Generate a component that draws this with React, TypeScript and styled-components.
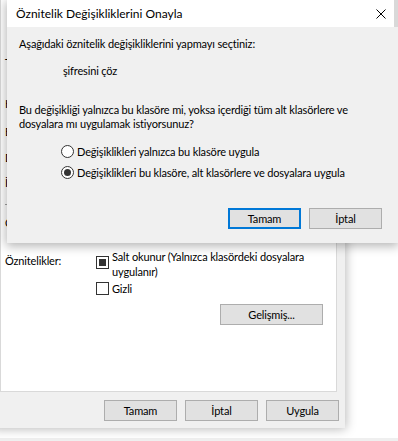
import React from 'react'
import styled, { createGlobalStyle } from 'styled-components'

const FONT = `'Lato', 'Liberation Sans', sans-serif`

const GlobalStyle = createGlobalStyle`
  html, body {
    margin: 0;
    padding: 0;
    background: #ffffff;
  }
  body {
    font-family: ${FONT};
    font-size: 11px;
    letter-spacing: -0.15px;
    color: #000;
  }
`

const Desk = styled.div`
  position: relative;
  width: 398px;
  height: 441px;
  overflow: hidden;
  background: #ffffff;
  display: flex;
  flex-direction: column;
  justify-content: flex-end;
`

const DeskEdge = styled.div`
  height: 3px;
  background: #efefef;
`

/* ---------- back window (folder properties) ---------- */

const BackWindow = styled.div`
  position: absolute;
  left: -8px;
  top: -40px;
  width: 353px;
  height: 468px;
  box-sizing: border-box;
  padding: 10px 6px 7px 8px;
  background: #f0f0f0;
  box-shadow: 0 0 10px 1px rgba(0, 0, 0, 0.28);
  display: flex;
  flex-direction: column;
`

const TabPanel = styled.div`
  height: 422px;
  margin-right: 2px;
  box-sizing: border-box;
  border: 1px solid #d9d9d9;
  background: #ffffff;
  padding: 85px 0 0 4px;
  display: flex;
  flex-direction: column;
`

const InfoRow = styled.div<{ $mt: number }>`
  height: 14px;
  line-height: 14px;
  margin-top: ${p => p.$mt}px;
  white-space: nowrap;
`

const Divider = styled.div<{ $mt: number }>`
  height: 1px;
  margin-top: ${p => p.$mt}px;
  margin-right: 12px;
  background: #a0a0a0;
`

const AttrGrid = styled.div`
  display: grid;
  grid-template-columns: 91px 1fr;
  margin-top: 19px;
`

const AttrLabel = styled.div`
  margin-top: 5px;
  line-height: 14px;
`

const AttrList = styled.div`
  display: flex;
  flex-direction: column;
`

const CheckRow = styled.label<{ $mt?: number; $boxTop?: number; $lh?: number }>`
  display: flex;
  align-items: flex-start;
  margin-top: ${p => p.$mt || 0}px;
  line-height: ${p => p.$lh || 15}px;

  & > span:first-child {
    margin-top: ${p => p.$boxTop || 0}px;
  }
`

const CheckBox = styled.span<{ $mixed?: boolean }>`
  flex: none;
  width: 13px;
  height: 13px;
  box-sizing: border-box;
  border: 1px solid #333;
  background: #fff;
  display: flex;
  align-items: center;
  justify-content: center;
  margin-right: 3px;

  &::after {
    content: '';
    width: 7px;
    height: 7px;
    background: ${p => (p.$mixed ? '#333' : 'transparent')};
  }
`

const RightRow = styled.div<{ $mt: number; $pr: number }>`
  display: flex;
  justify-content: flex-end;
  gap: 8px;
  margin-top: ${p => p.$mt}px;
  padding-right: ${p => p.$pr}px;
`

const Button = styled.button<{ $w?: number; $default?: boolean }>`
  width: ${p => p.$w || 73}px;
  height: 21px;
  box-sizing: border-box;
  padding: 0;
  font-family: ${FONT};
  font-size: 11px;
  letter-spacing: -0.15px;
  color: #000;
  background: #e1e1e1;
  border: ${p => (p.$default ? '2px solid #0078d7' : '1px solid #adadad')};
`

/* ---------- front dialog ---------- */

const Dialog = styled.div`
  position: absolute;
  left: 7px;
  top: 0;
  width: 391px;
  height: 243px;
  background: #f0f0f0;
  box-shadow: 0 2px 10px 1px rgba(0, 0, 0, 0.3);
  display: flex;
  flex-direction: column;
`

const TitleBar = styled.div`
  height: 27px;
  flex: none;
  box-sizing: border-box;
  display: flex;
  align-items: center;
  justify-content: space-between;
  padding-left: 9px;
  background: #fff;
  border-right: 4px solid #d9d9d9;
  font-size: 12px;
  letter-spacing: 0;
`

const CloseIcon = styled.svg`
  width: 10px;
  height: 10px;
  margin-right: 8px;
`

const Body = styled.div`
  padding: 10px 12px 0 12px;
  display: flex;
  flex-direction: column;
`

const Line = styled.div<{ $mt?: number; $ml?: number }>`
  line-height: 14px;
  margin-top: ${p => p.$mt || 0}px;
  margin-left: ${p => p.$ml || 0}px;
  white-space: nowrap;
`

const RadioRow = styled.label<{ $mt: number }>`
  display: flex;
  align-items: center;
  height: 14px;
  margin-top: ${p => p.$mt}px;
  margin-left: 42px;
  white-space: nowrap;
`

const Radio = styled.span<{ $on?: boolean }>`
  width: 13px;
  height: 13px;
  box-sizing: border-box;
  border: 1px solid #333;
  border-radius: 50%;
  background: #fff;
  margin-right: 3px;
  display: flex;
  align-items: center;
  justify-content: center;

  &::after {
    content: '';
    width: 7px;
    height: 7px;
    border-radius: 50%;
    background: ${p => (p.$on ? '#333' : 'transparent')};
  }
`

const info: { text: string; mt: number }[] = [
  { text: 'Tür:', mt: 0 },
  { text: 'Konum:', mt: 27 },
  { text: 'Boyut:', mt: 14 },
  { text: 'Disk boyutu:', mt: 12 },
  { text: 'İçerik:', mt: 11 },
]

const App: React.FC = () => {
  return (
    <Desk>
      <GlobalStyle />
      <DeskEdge />

      <BackWindow>
        <TabPanel>
          {info.map(row => (
            <InfoRow key={row.text} $mt={row.mt}>{row.text}</InfoRow>
          ))}
          <Divider $mt={14} />
          <InfoRow $mt={11}>Oluşturulma:</InfoRow>

          <AttrGrid>
            <AttrLabel>Öznitelikler:</AttrLabel>
            <AttrList>
              <CheckRow $boxTop={7}>
                <CheckBox $mixed />
                <span>Salt okunur (Yalnızca klasördeki dosyalara<br />uygulanır)</span>
              </CheckRow>
              <CheckRow $mt={3} $lh={13}>
                <CheckBox />
                <span>Gizli</span>
              </CheckRow>
            </AttrList>
          </AttrGrid>

          <RightRow $mt={9} $pr={13}>
            <Button $w={103}>Gelişmiş...</Button>
          </RightRow>
        </TabPanel>

        <RightRow $mt={8} $pr={0}>
          <Button>Tamam</Button>
          <Button>İptal</Button>
          <Button>Uygula</Button>
        </RightRow>
      </BackWindow>

      <Dialog>
        <TitleBar>
          <span>Öznitelik Değişikliklerini Onayla</span>
          <CloseIcon viewBox="0 0 10 10">
            <path d="M0.5 0.5 L9.5 9.5 M9.5 0.5 L0.5 9.5" stroke="#000" strokeWidth="1" />
          </CloseIcon>
        </TitleBar>
        <Body>
          <Line>Aşağıdaki öznitelik değişikliklerini yapmayı seçtiniz:</Line>
          <Line $mt={13} $ml={44}>şifresini çöz</Line>
          <Line $mt={25}>
            Bu değişikliği yalnızca bu klasöre mi, yoksa içerdiği tüm alt klasörlere ve
            <br />
            dosyalara mı uygulamak istiyorsunuz?
          </Line>
          <RadioRow $mt={13}>
            <Radio />
            Değişiklikleri yalnızca bu klasöre uygula
          </RadioRow>
          <RadioRow $mt={7}>
            <Radio $on />
            Değişiklikleri bu klasöre, alt klasörlere ve dosyalara uygula
          </RadioRow>
          <RightRow $mt={29} $pr={4}>
            <Button $default>Tamam</Button>
            <Button>İptal</Button>
          </RightRow>
        </Body>
      </Dialog>
    </Desk>
  )
}

export default App
